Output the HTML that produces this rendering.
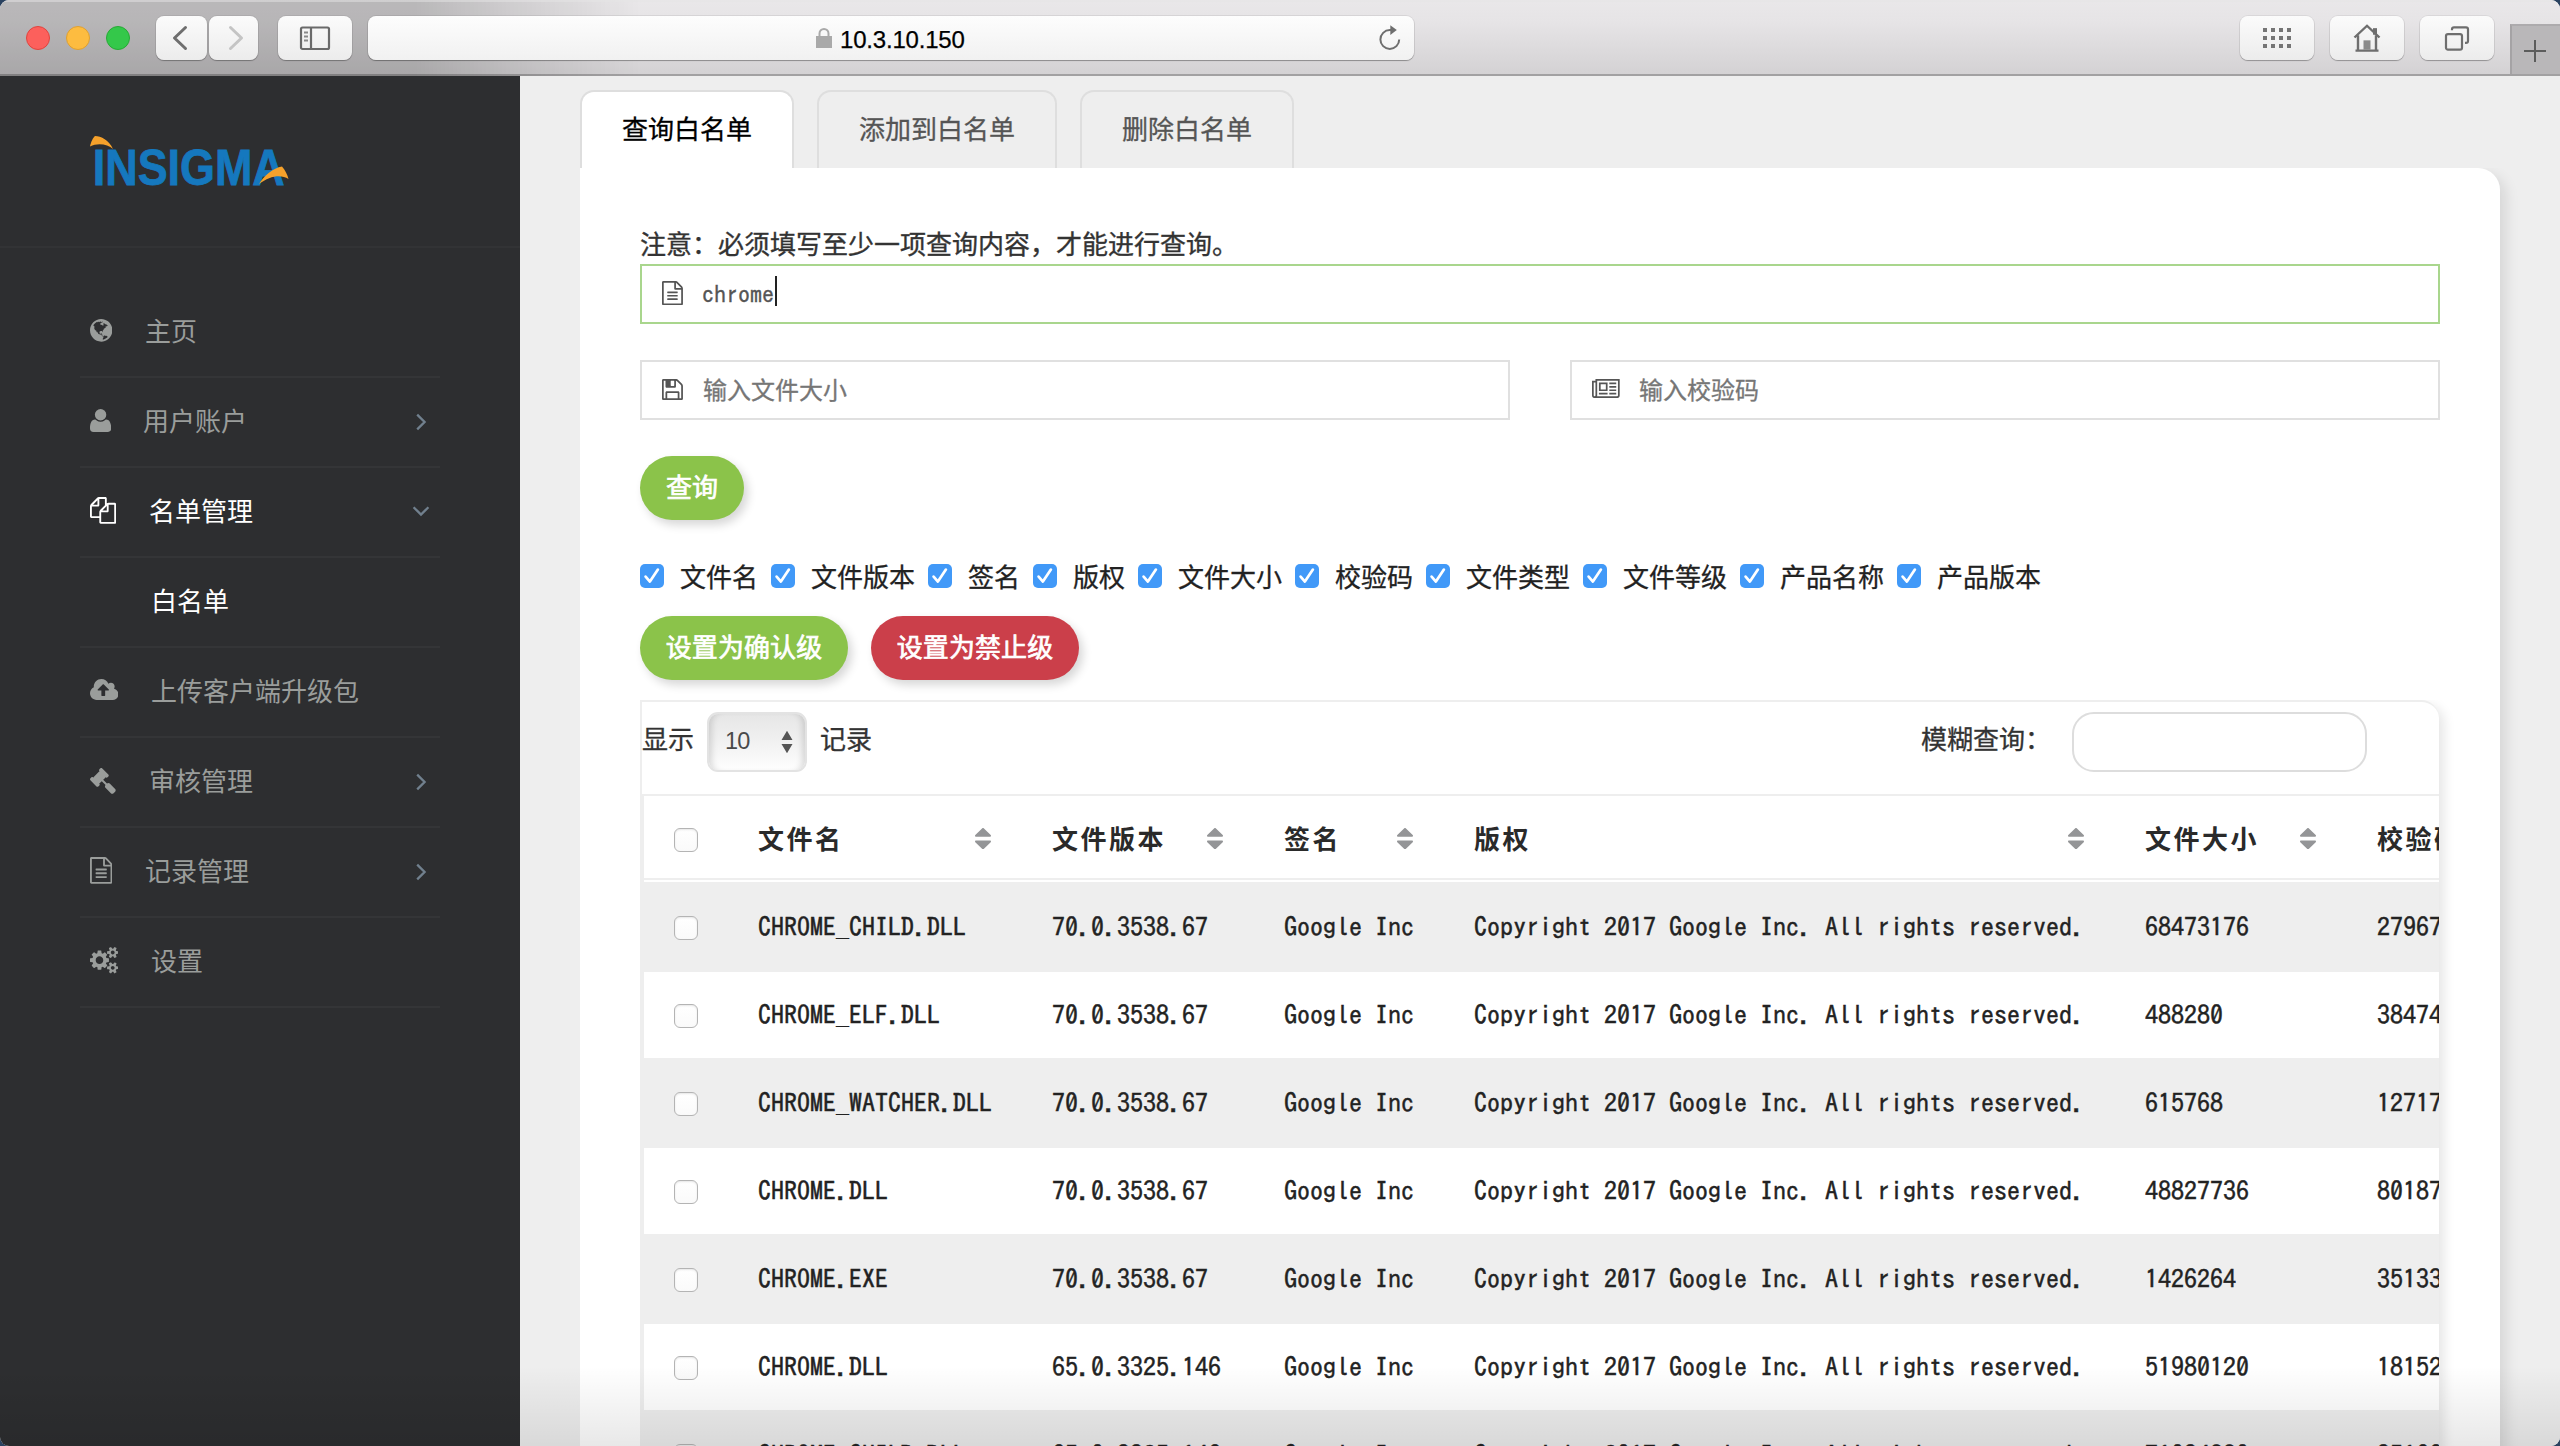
<!DOCTYPE html>
<html lang="zh-CN">
<head>
<meta charset="utf-8">
<title>10.3.10.150</title>
<style>
*{box-sizing:border-box;margin:0;padding:0}
html,body{width:2560px;height:1446px;overflow:hidden;background:#2a4260}
body{font-family:"Liberation Sans","Noto Sans CJK SC",sans-serif;position:relative}
.abs{position:absolute}
#win{position:absolute;left:0;top:0;width:2560px;height:1446px;border-radius:9px 9px 9px 9px;overflow:hidden;background:#eeeeee}
/* ---------- Safari toolbar ---------- */
#tb{position:absolute;left:0;top:0;width:2560px;height:76px;
 background:linear-gradient(to right,rgba(0,0,0,.205) 0,rgba(0,0,0,.205) 415px,rgba(0,0,0,.10) 520px,rgba(0,0,0,0) 640px),linear-gradient(to bottom,#e9e7e9 0,#e6e4e6 20px,#d3d1d3 74px);
 border-top:2px solid rgba(255,255,255,.45);border-bottom:2px solid rgba(0,0,0,.30)}
.tl{position:absolute;top:24px;width:24px;height:24px;border-radius:50%}
.tbtn{position:absolute;top:14px;height:44px;border-radius:8px;background:linear-gradient(#fbfbfb,#ececec);box-shadow:0 1px 1px rgba(0,0,0,.28),0 0 0 1px rgba(0,0,0,.06)}
#url{position:absolute;left:368px;top:14px;width:1046px;height:44px;border-radius:8px;background:linear-gradient(#fdfdfd,#f1f1f1);box-shadow:0 1px 1px rgba(0,0,0,.30),0 0 0 1px rgba(0,0,0,.07)}
#urltxt{position:absolute;left:840px;top:23px;font-size:24px;line-height:30px;color:#000;letter-spacing:-.2px;white-space:nowrap;-webkit-text-stroke:.25px #000}
#newtab{position:absolute;left:2510px;top:22px;width:50px;height:50px;background:#b9b7b9;border-left:2px solid #a5a3a5;border-top:2px solid #adabad}
/* ---------- sidebar ---------- */
#side{position:absolute;left:0;top:76px;width:520px;height:1370px;background:#2d2e30}
#side .hr{position:absolute;left:80px;width:360px;height:2px;background:#343537}
#side .hr0{position:absolute;left:0;top:170px;width:520px;height:2px;background:#323335}
.mi{position:absolute;margin-top:2px;font-size:26px;line-height:40px;color:#9a9d9b;white-space:nowrap}
.mi.on{color:#ffffff}
/* ---------- main ---------- */
#main{position:absolute;left:520px;top:76px;width:2040px;height:1370px;background:#eeeeee;font-family:"Liberation Sans","Noto Sans CJK SC",sans-serif}
.tab{position:absolute;top:14px;height:80px;border:2px solid #dedede;border-bottom:none;border-radius:14px 14px 0 0;font-size:26px;line-height:40px;color:#555;text-align:center;padding-top:17.500px;white-space:nowrap;-webkit-text-stroke:.3px #555}
.tab.on{background:#fff;color:#000;-webkit-text-stroke:.3px #000}
#panel{position:absolute;left:60px;top:92px;width:1920px;height:1400px;background:#fff;border-radius:0 22px 0 0;box-shadow:6px 6px 14px rgba(0,0,0,.10);clip-path:inset(0 -40px -40px 0)}
.note{position:absolute;left:60px;top:57px;font-size:26px;line-height:40px;color:#333;white-space:nowrap;-webkit-text-stroke:.35px #333}
.hw{display:inline-block;width:13px;text-align:left}
.inp{position:absolute;height:60px;border:2px solid #e0e0e0;background:#fff}
.inp .t.ph{left:61px;top:8.500px;color:#767676;-webkit-text-stroke:.3px #767676}
.inp.focus{border-color:#a9d68d}
.inp .t{position:absolute;left:60px;top:8px;font-size:24px;line-height:40px;color:#555;white-space:nowrap}
.inp .t.lat{font-family:"IPAGothic","Liberation Mono",monospace;-webkit-text-stroke:.35px #555}
.caret{position:absolute;left:132.500px;top:10px;width:2px;height:30px;background:#222}
.btn{position:absolute;height:64px;border-radius:32px;color:#fff;font-weight:normal;-webkit-text-stroke:.7px #fff;font-size:26px;line-height:40px;text-align:center;padding-top:12px;white-space:nowrap;box-shadow:4px 5px 10px rgba(0,0,0,.16);letter-spacing:.1px}
.g{background:#8bc34a}
.r{background:#cb3f4a}
.ck{position:absolute;top:396px;width:24px;height:24px;border-radius:5px;background:#4199f8}
.ck svg{position:absolute;left:0;top:0}
.cl{position:absolute;top:389.5px;font-size:26px;line-height:40px;color:#222;white-space:nowrap;-webkit-text-stroke:.3px #222}
/* table card */
#card{position:absolute;left:60px;top:532px;width:1799px;height:900px;border:2px solid #eeeeee;border-right:none;border-radius:0 18px 0 0;background:#fff;overflow:hidden;box-shadow:5px 5px 12px rgba(0,0,0,.10);clip-path:inset(0 -40px -40px 0)}
#card .lb{position:absolute;left:0;top:92px;width:2px;height:900px;background:#eeeeee}
.lab{position:absolute;font-size:26px;line-height:40px;color:#333;white-space:nowrap;-webkit-text-stroke:.3px #333}
#sel{position:absolute;left:65px;top:10px;width:100px;height:60px;border-radius:11px;border:2px solid #e3e3e3;background:linear-gradient(#e6e6e6,#f1f1f1 50%,#fefefe);box-shadow:inset 7px 0 6px -4px rgba(0,0,0,.13),inset -7px 0 6px -4px rgba(0,0,0,.13)}
#sel span{position:absolute;left:16px;top:7px;font-size:23.500px;line-height:40px;color:#4a4a4a;letter-spacing:-.8px}
#srch{position:absolute;left:1430px;top:10px;width:295px;height:60px;border:2px solid #dddddd;border-radius:22px;background:#fff}
.hl{position:absolute;left:0;width:1800px;height:2px;background:#eeeeee}
.th{position:absolute;top:118px;font-size:26px;line-height:40px;font-weight:bold;color:#2a2a2a;letter-spacing:2.5px;white-space:nowrap}
.row{position:absolute;left:2px;width:1800px;height:88px;border-top:2px solid #eeeeee;background:#fff}
.row.odd{background:#eeeeee}
.row span{position:absolute;top:22px;font-family:"IPAGothic","Liberation Mono",monospace;font-size:26px;line-height:40px;color:#222;white-space:pre;-webkit-text-stroke:.45px #222}
.cb{position:absolute;width:24px;height:24px;border-radius:6px;background:linear-gradient(#fff,#fafafa);border:1.5px solid #b4b4b4;box-shadow:inset 0 1px 2px rgba(0,0,0,.10)}
#fade{position:absolute;left:0;top:1366px;width:2560px;height:80px;background:linear-gradient(rgba(0,0,0,0),rgba(0,0,0,.09));pointer-events:none}
</style>
</head>
<body>
<div id="win">

<div id="main">
<div class="tab on" style="left:60px;width:214px">查询白名单</div>
<div class="tab" style="left:297px;width:240px">添加到白名单</div>
<div class="tab" style="left:560px;width:214px">删除白名单</div>
<div id="panel">
<div class="note">注意：必须填写至少一项查询内容，才能进行查询。</div>
<div class="inp focus" style="left:60px;top:96px;width:1800px">
<svg class="abs" style="left:19.90px;top:15.10px" width="20.95" height="24.30" viewBox="0 -1536 1536 1792" preserveAspectRatio="none"><path fill="#555" transform="scale(1,-1)" d="M1468 1156 1156 1468C1119 1505 1045 1536 992 1536H96C43 1536 0 1493 0 1440V-160C0 -213 43 -256 96 -256H1440C1493 -256 1536 -213 1536 -160V992C1536 1045 1505 1119 1468 1156ZM1024 1400C1041 1394 1058 1385 1065 1378L1378 1065C1385 1058 1394 1041 1400 1024H1024ZM1408 -128H128V1408H896V992C896 939 939 896 992 896H1408ZM384 736V672C384 654 398 640 416 640H1120C1138 640 1152 654 1152 672V736C1152 754 1138 768 1120 768H416C398 768 384 754 384 736ZM1120 512H416C398 512 384 498 384 480V416C384 398 398 384 416 384H1120C1138 384 1152 398 1152 416V480C1152 498 1138 512 1120 512ZM1120 256H416C398 256 384 242 384 224V160C384 142 398 128 416 128H1120C1138 128 1152 142 1152 160V224C1152 242 1138 256 1120 256Z"/></svg>
<span class="t lat">chrome</span><i class="caret"></i></div>
<div class="inp" style="left:60px;top:192px;width:870px">
<svg class="abs" style="left:19.90px;top:16.80px" width="20.95" height="21.10" viewBox="0 -1408 1536 1536" preserveAspectRatio="none"><path fill="#555" transform="scale(1,-1)" d="M384 0V384H1152V0ZM1280 0V416C1280 469 1237 512 1184 512H352C299 512 256 469 256 416V0H128V1280H256V864C256 811 299 768 352 768H928C981 768 1024 811 1024 864V1280C1044 1280 1083 1264 1097 1250L1378 969C1391 956 1408 915 1408 896V0ZM896 928C896 911 881 896 864 896H672C655 896 640 911 640 928V1248C640 1265 655 1280 672 1280H864C881 1280 896 1265 896 1248V928ZM1536 896C1536 949 1506 1022 1468 1060L1188 1340C1150 1378 1077 1408 1024 1408H96C43 1408 0 1365 0 1312V-32C0 -85 43 -128 96 -128H1440C1493 -128 1536 -85 1536 -32Z"/></svg>
<span class="t ph">输入文件大小</span></div>
<div class="inp" style="left:990px;top:192px;width:870px">
<svg class="abs" style="left:19.90px;top:16.80px" width="27.70" height="19.05" viewBox="0 -1408 2048 1408" preserveAspectRatio="none"><path fill="#555" transform="scale(1,-1)" d="M1024 1024V640H640V1024H1024ZM1152 384H512V256H1152ZM1152 1152H512V512H1152ZM1792 384H1280V256H1792ZM1792 640H1280V512H1792ZM1792 896H1280V768H1792ZM1792 1152H1280V1024H1792ZM256 192C256 157 227 128 192 128C157 128 128 157 128 192V1152H256V192ZM1920 192C1920 157 1891 128 1856 128H373C380 148 384 170 384 192V1280H1920V192ZM2048 1408H256V1280H0V192C0 86 86 0 192 0H1856C1962 0 2048 86 2048 192Z"/></svg>
<span class="t ph" style="left:67px">输入校验码</span></div>
<div class="btn g" style="left:60px;top:288px;width:104px">查询</div>
<div class="ck" style="left:60px"><svg width="24" height="24" viewBox="0 0 24 24"><path d="M5.6 12.6l4.3 5 8-12" fill="none" stroke="#fff" stroke-width="2.7" stroke-linecap="round" stroke-linejoin="round"/></svg></div>
<div class="cl" style="left:100px">文件名</div>
<div class="ck" style="left:191px"><svg width="24" height="24" viewBox="0 0 24 24"><path d="M5.6 12.6l4.3 5 8-12" fill="none" stroke="#fff" stroke-width="2.7" stroke-linecap="round" stroke-linejoin="round"/></svg></div>
<div class="cl" style="left:231px">文件版本</div>
<div class="ck" style="left:348px"><svg width="24" height="24" viewBox="0 0 24 24"><path d="M5.6 12.6l4.3 5 8-12" fill="none" stroke="#fff" stroke-width="2.7" stroke-linecap="round" stroke-linejoin="round"/></svg></div>
<div class="cl" style="left:388px">签名</div>
<div class="ck" style="left:453px"><svg width="24" height="24" viewBox="0 0 24 24"><path d="M5.6 12.6l4.3 5 8-12" fill="none" stroke="#fff" stroke-width="2.7" stroke-linecap="round" stroke-linejoin="round"/></svg></div>
<div class="cl" style="left:493px">版权</div>
<div class="ck" style="left:558px"><svg width="24" height="24" viewBox="0 0 24 24"><path d="M5.6 12.6l4.3 5 8-12" fill="none" stroke="#fff" stroke-width="2.7" stroke-linecap="round" stroke-linejoin="round"/></svg></div>
<div class="cl" style="left:598px">文件大小</div>
<div class="ck" style="left:715px"><svg width="24" height="24" viewBox="0 0 24 24"><path d="M5.6 12.6l4.3 5 8-12" fill="none" stroke="#fff" stroke-width="2.7" stroke-linecap="round" stroke-linejoin="round"/></svg></div>
<div class="cl" style="left:755px">校验码</div>
<div class="ck" style="left:846px"><svg width="24" height="24" viewBox="0 0 24 24"><path d="M5.6 12.6l4.3 5 8-12" fill="none" stroke="#fff" stroke-width="2.7" stroke-linecap="round" stroke-linejoin="round"/></svg></div>
<div class="cl" style="left:886px">文件类型</div>
<div class="ck" style="left:1003px"><svg width="24" height="24" viewBox="0 0 24 24"><path d="M5.6 12.6l4.3 5 8-12" fill="none" stroke="#fff" stroke-width="2.7" stroke-linecap="round" stroke-linejoin="round"/></svg></div>
<div class="cl" style="left:1043px">文件等级</div>
<div class="ck" style="left:1160px"><svg width="24" height="24" viewBox="0 0 24 24"><path d="M5.6 12.6l4.3 5 8-12" fill="none" stroke="#fff" stroke-width="2.7" stroke-linecap="round" stroke-linejoin="round"/></svg></div>
<div class="cl" style="left:1200px">产品名称</div>
<div class="ck" style="left:1317px"><svg width="24" height="24" viewBox="0 0 24 24"><path d="M5.6 12.6l4.3 5 8-12" fill="none" stroke="#fff" stroke-width="2.7" stroke-linecap="round" stroke-linejoin="round"/></svg></div>
<div class="cl" style="left:1357px">产品版本</div>
<div class="btn g" style="left:60px;top:448px;width:208px">设置为确认级</div>
<div class="btn r" style="left:291px;top:448px;width:208px">设置为禁止级</div>
<div id="card">
<div class="lab" style="left:0px;top:18px">显示</div>
<div id="sel"><span>10</span><svg class="abs" style="left:71px;top:16px" width="14" height="24" viewBox="0 0 14 24"><path d="M7 0.800l5.500 9.200h-11zM7 23.200l5.500-9.200h-11z" fill="#555"/></svg></div>
<div class="lab" style="left:178px;top:18px">记录</div>
<div class="lab" style="left:1279px;top:18px">模糊查询：</div>
<div id="srch"></div>
<div class="hl" style="top:92px"></div>
<div class="lb"></div>
<div class="cb" style="left:32px;top:126px"></div>
<div class="th" style="left:116px">文件名</div>
<svg class="abs" style="left:333.00px;top:125.80px" width="16.00" height="21.20" viewBox="0 -1344 1024 1408" preserveAspectRatio="none"><path fill="#949597" transform="scale(1,-1)" d="M1024 448C1024 483 995 512 960 512H64C29 512 0 483 0 448C0 431 7 415 19 403L467 -45C479 -57 495 -64 512 -64C529 -64 545 -57 557 -45L1005 403C1017 415 1024 431 1024 448ZM1024 832C1024 849 1017 865 1005 877L557 1325C545 1337 529 1344 512 1344C495 1344 479 1337 467 1325L19 877C7 865 0 849 0 832C0 797 29 768 64 768H960C995 768 1024 797 1024 832Z"/></svg>
<div class="th" style="left:410px">文件版本</div>
<svg class="abs" style="left:565.00px;top:125.80px" width="16.00" height="21.20" viewBox="0 -1344 1024 1408" preserveAspectRatio="none"><path fill="#949597" transform="scale(1,-1)" d="M1024 448C1024 483 995 512 960 512H64C29 512 0 483 0 448C0 431 7 415 19 403L467 -45C479 -57 495 -64 512 -64C529 -64 545 -57 557 -45L1005 403C1017 415 1024 431 1024 448ZM1024 832C1024 849 1017 865 1005 877L557 1325C545 1337 529 1344 512 1344C495 1344 479 1337 467 1325L19 877C7 865 0 849 0 832C0 797 29 768 64 768H960C995 768 1024 797 1024 832Z"/></svg>
<div class="th" style="left:642px">签名</div>
<svg class="abs" style="left:755.00px;top:125.80px" width="16.00" height="21.20" viewBox="0 -1344 1024 1408" preserveAspectRatio="none"><path fill="#949597" transform="scale(1,-1)" d="M1024 448C1024 483 995 512 960 512H64C29 512 0 483 0 448C0 431 7 415 19 403L467 -45C479 -57 495 -64 512 -64C529 -64 545 -57 557 -45L1005 403C1017 415 1024 431 1024 448ZM1024 832C1024 849 1017 865 1005 877L557 1325C545 1337 529 1344 512 1344C495 1344 479 1337 467 1325L19 877C7 865 0 849 0 832C0 797 29 768 64 768H960C995 768 1024 797 1024 832Z"/></svg>
<div class="th" style="left:832px">版权</div>
<svg class="abs" style="left:1426.00px;top:125.80px" width="16.00" height="21.20" viewBox="0 -1344 1024 1408" preserveAspectRatio="none"><path fill="#949597" transform="scale(1,-1)" d="M1024 448C1024 483 995 512 960 512H64C29 512 0 483 0 448C0 431 7 415 19 403L467 -45C479 -57 495 -64 512 -64C529 -64 545 -57 557 -45L1005 403C1017 415 1024 431 1024 448ZM1024 832C1024 849 1017 865 1005 877L557 1325C545 1337 529 1344 512 1344C495 1344 479 1337 467 1325L19 877C7 865 0 849 0 832C0 797 29 768 64 768H960C995 768 1024 797 1024 832Z"/></svg>
<div class="th" style="left:1503px">文件大小</div>
<svg class="abs" style="left:1658.00px;top:125.80px" width="16.00" height="21.20" viewBox="0 -1344 1024 1408" preserveAspectRatio="none"><path fill="#949597" transform="scale(1,-1)" d="M1024 448C1024 483 995 512 960 512H64C29 512 0 483 0 448C0 431 7 415 19 403L467 -45C479 -57 495 -64 512 -64C529 -64 545 -57 557 -45L1005 403C1017 415 1024 431 1024 448ZM1024 832C1024 849 1017 865 1005 877L557 1325C545 1337 529 1344 512 1344C495 1344 479 1337 467 1325L19 877C7 865 0 849 0 832C0 797 29 768 64 768H960C995 768 1024 797 1024 832Z"/></svg>
<div class="th" style="left:1735px">校验码</div>
<div class="hl" style="top:176px;left:2px"></div>
<div class="row odd" style="top:180px">
<div class="cb" style="left:30px;top:32px"></div>
<span style="left:114px">CHROME_CHILD.DLL</span><span style="left:408px">70.0.3538.67</span><span style="left:640px">Google Inc</span><span style="left:830px">Copyright 2017 Google Inc. All rights reserved.</span><span style="left:1501px">68473176</span><span style="left:1733px">27967b5c</span>
</div>
<div class="row" style="top:268px">
<div class="cb" style="left:30px;top:32px"></div>
<span style="left:114px">CHROME_ELF.DLL</span><span style="left:408px">70.0.3538.67</span><span style="left:640px">Google Inc</span><span style="left:830px">Copyright 2017 Google Inc. All rights reserved.</span><span style="left:1501px">488280</span><span style="left:1733px">38474e0a</span>
</div>
<div class="row odd" style="top:356px">
<div class="cb" style="left:30px;top:32px"></div>
<span style="left:114px">CHROME_WATCHER.DLL</span><span style="left:408px">70.0.3538.67</span><span style="left:640px">Google Inc</span><span style="left:830px">Copyright 2017 Google Inc. All rights reserved.</span><span style="left:1501px">615768</span><span style="left:1733px">12717d3f</span>
</div>
<div class="row" style="top:444px">
<div class="cb" style="left:30px;top:32px"></div>
<span style="left:114px">CHROME.DLL</span><span style="left:408px">70.0.3538.67</span><span style="left:640px">Google Inc</span><span style="left:830px">Copyright 2017 Google Inc. All rights reserved.</span><span style="left:1501px">48827736</span><span style="left:1733px">80187a6c</span>
</div>
<div class="row odd" style="top:532px">
<div class="cb" style="left:30px;top:32px"></div>
<span style="left:114px">CHROME.EXE</span><span style="left:408px">70.0.3538.67</span><span style="left:640px">Google Inc</span><span style="left:830px">Copyright 2017 Google Inc. All rights reserved.</span><span style="left:1501px">1426264</span><span style="left:1733px">35133b9e</span>
</div>
<div class="row" style="top:620px">
<div class="cb" style="left:30px;top:32px"></div>
<span style="left:114px">CHROME.DLL</span><span style="left:408px">65.0.3325.146</span><span style="left:640px">Google Inc</span><span style="left:830px">Copyright 2017 Google Inc. All rights reserved.</span><span style="left:1501px">51980120</span><span style="left:1733px">18152f4d</span>
</div>
<div class="row odd" style="top:708px">
<div class="cb" style="left:30px;top:32px"></div>
<span style="left:114px">CHROME_CHILD.DLL</span><span style="left:408px">65.0.3325.146</span><span style="left:640px">Google Inc</span><span style="left:830px">Copyright 2017 Google Inc. All rights reserved.</span><span style="left:1501px">71034880</span><span style="left:1733px">35166c2a</span>
</div>
</div>
</div>
</div>
<div id="side">
<svg class="abs" style="left:84px;top:52px" width="216" height="64" viewBox="0 0 216 64">
<text x="8.800" y="56.800" font-family="'Liberation Sans',sans-serif" font-weight="bold" font-size="49.500" fill="#1578be" stroke="#1578be" stroke-width=".8" textLength="192" lengthAdjust="spacingAndGlyphs">INSIGMA</text>
<path d="M6 18.500C7 14 9 9.500 11 8C17 8 25 12 29 21C24 16.500 14 14.500 6 18.500Z" fill="#f5a12b"/>
<path d="M175 56C180 48 189 40 198 38.500C201 42 203.500 47 204.500 51C197 46 186 47.500 175 56Z" fill="#f5a12b"/>
</svg>

<div class="hr0"></div>
<div class="hr" style="top:300px"></div>
<div class="hr" style="top:390px"></div>
<div class="hr" style="top:480px"></div>
<div class="hr" style="top:570px"></div>
<div class="hr" style="top:660px"></div>
<div class="hr" style="top:750px"></div>
<div class="hr" style="top:840px"></div>
<div class="hr" style="top:930px"></div>
<svg class="abs" style="left:90.00px;top:243.30px" width="22.40" height="22.70" viewBox="0 -1408 1536 1536" preserveAspectRatio="none"><path fill="#9a9d9b" transform="scale(1,-1)" d="M768 1408C344 1408 0 1064 0 640C0 216 344 -128 768 -128C1192 -128 1536 216 1536 640C1536 1064 1192 1408 768 1408ZM1042 887C1053 894 1071 903 1085 899C1096 896 1105 892 1092 883C1086 879 1077 883 1070 881C1079 879 1092 875 1088 866C1114 851 1080 833 1063 835C1071 834 1046 819 1046 820C1037 815 1025 815 1018 806C1010 795 1021 776 1006 780C1000 767 977 774 967 760C978 748 956 731 945 746C935 742 940 731 930 725C934 719 935 713 928 709C930 710 942 700 945 699C943 694 939 690 934 690C939 677 928 663 919 655C909 647 886 639 883 637C865 620 853 595 885 588C886 588 886 555 887 554C889 542 894 507 873 520C863 525 857 553 854 564C851 576 850 576 842 588C829 573 827 584 816 591C805 597 789 595 783 601C768 590 757 593 754 610C750 602 758 590 757 587C752 577 743 579 735 585C722 595 694 578 679 585C680 585 684 581 687 579C684 567 677 574 671 570C664 565 658 555 652 550C665 525 651 501 652 474C652 454 665 419 684 408C693 403 723 401 732 405C746 411 744 422 749 434C754 447 760 453 775 454C818 456 785 421 780 403C777 390 776 375 774 363C779 361 784 362 789 362C789 366 792 371 792 374C798 364 818 361 824 373C831 361 845 352 847 338C849 324 862 309 843 309C829 309 845 281 847 276C858 256 876 248 896 258C896 250 893 228 882 226C872 224 853 245 857 256C856 252 853 249 850 247C840 259 823 265 814 277C812 280 785 321 791 323C777 317 749 327 736 334C715 345 712 374 686 370C668 367 663 360 642 368C628 373 616 383 602 390C586 399 558 408 552 428C546 444 548 463 539 478C533 488 515 508 502 508C514 508 491 538 488 541C477 554 437 589 445 609C447 612 425 620 421 621C425 611 426 600 431 591C436 581 442 572 448 562C459 544 474 522 472 500C459 496 463 515 459 523C452 536 433 536 428 550C430 551 431 551 433 552C434 569 409 583 413 595C399 606 399 627 389 641C380 654 365 660 352 669C347 672 311 718 324 721C304 716 294 763 297 775C297 775 295 775 295 776C299 788 292 850 308 851C297 850 294 877 297 882C299 886 314 871 315 869C321 872 327 880 325 887C322 895 311 902 304 908C301 910 261 936 260 935C264 942 263 949 257 954C238 939 248 968 238 971C234 972 230 975 226 979C284 1071 365 1148 461 1201C467 1202 475 1202 483 1202C501 1200 511 1185 524 1176C526 1181 522 1189 519 1194C522 1202 534 1204 541 1206C550 1207 563 1209 571 1205C565 1214 558 1222 551 1230C550 1229 547 1227 546 1225C535 1234 514 1222 504 1218C496 1214 489 1209 481 1206C476 1204 473 1204 469 1205C499 1221 530 1235 563 1246C569 1242 575 1235 584 1228C578 1233 578 1210 580 1206C591 1191 615 1201 630 1201C629 1201 674 1195 665 1206C672 1196 672 1181 681 1172C690 1181 677 1191 683 1200C685 1204 703 1209 709 1212C716 1217 704 1224 701 1226C691 1232 652 1235 671 1258C678 1266 703 1262 711 1257C722 1251 734 1240 719 1230C726 1229 759 1220 754 1207C757 1213 762 1222 770 1222C779 1221 781 1200 785 1195C799 1170 823 1220 827 1218C809 1225 843 1234 852 1231C859 1228 870 1204 857 1205C868 1195 869 1173 849 1174C835 1175 819 1194 806 1179C797 1169 793 1154 784 1145C770 1131 751 1132 734 1134C741 1133 719 1110 717 1106C711 1099 707 1091 705 1083C703 1073 705 1062 700 1052C717 1057 726 1026 719 1025C740 1028 757 1028 777 1021C791 1016 812 1010 818 995C822 1001 841 998 847 996C859 990 860 977 863 966C867 951 880 926 897 934C900 936 922 946 914 952C906 959 897 977 905 987C913 998 932 1001 937 1015C945 1038 913 1035 913 1052C913 1062 926 1065 925 1077C925 1087 910 1107 922 1114C932 1120 980 1110 989 1104C998 1098 1026 1090 1028 1081C1026 1081 1025 1081 1023 1081C1031 1074 1038 1059 1024 1055C1033 1057 1059 1047 1041 1041C1047 1044 1052 1042 1058 1046C1065 1050 1069 1057 1078 1052C1080 1051 1091 1073 1097 1072C1106 1071 1108 1058 1112 1052C1116 1043 1127 1040 1131 1031C1138 1014 1135 998 1158 992C1165 990 1184 1001 1183 986C1187 990 1189 993 1189 994C1190 980 1196 964 1213 966C1213 966 1213 947 1211 944C1205 935 1190 937 1181 932C1178 931 1154 910 1157 907C1144 922 1123 922 1106 918C1088 915 1071 913 1054 906C1046 902 1038 898 1032 891C1029 887 1024 869 1019 868C1029 870 1034 881 1042 887ZM879 10C878 15 877 25 877 26C876 42 893 53 892 68C881 71 878 82 880 94C882 111 897 123 909 134C921 145 924 168 921 182C916 206 916 231 912 255C913 249 930 251 933 243C937 250 939 259 944 266C948 272 955 274 961 279C971 285 992 308 1004 294C1014 282 989 269 1002 258C1006 266 1002 278 1010 286C1026 304 1037 284 1053 279C1070 274 1076 268 1089 257C1085 261 1105 268 1107 269C1126 273 1134 262 1147 252C1161 242 1183 235 1181 215C1191 213 1197 210 1205 207C1213 203 1224 205 1230 199C1138 102 1016 34 879 10Z"/></svg>
<svg class="abs" style="left:89.75px;top:333.30px" width="21.200" height="23" viewBox="0 0 21.200 23"><circle cx="10.600" cy="5.700" r="5.700" fill="#9a9d9b"/><path fill="#9a9d9b" d="M3.500 23C1.200 23 0 21.600 0 19.500C0 14.500 1.300 10.500 5 10.400C6 10.400 7.500 12.700 10.600 12.700C13.700 12.700 15.200 10.400 16.200 10.400C19.900 10.500 21.200 14.500 21.200 19.500C21.200 21.600 20 23 17.700 23Z"/></svg>
<svg class="abs" style="left:90.00px;top:421.20px" width="26.10" height="26.80" viewBox="0 -1536 1792 1792" preserveAspectRatio="none"><path fill="#ffffff" transform="scale(1,-1)" d="M1696 1152H1280C1241 1152 1191 1135 1152 1112V1440C1152 1493 1109 1536 1056 1536H640C587 1536 513 1505 476 1468L68 1060C31 1023 0 949 0 896V224C0 171 43 128 96 128H640V-160C640 -213 683 -256 736 -256H1696C1749 -256 1792 -213 1792 -160V1056C1792 1109 1749 1152 1696 1152ZM1152 939V640H853ZM512 1323V1024H213ZM708 676C671 639 640 565 640 512V256H128V896H544C597 896 640 939 640 992V1408H1024V992ZM1664 -128H768V512H1184C1237 512 1280 555 1280 608V1024H1664Z"/></svg>
<svg class="abs" style="left:89.75px;top:603.30px" width="28.45" height="20.90" viewBox="0 -1408 1920 1408" preserveAspectRatio="none"><path fill="#9a9d9b" transform="scale(1,-1)" d="M1280 672C1280 655 1266 640 1248 640H1024V288C1024 271 1009 256 992 256H800C783 256 768 271 768 288V640H544C526 640 512 654 512 672C512 681 516 689 522 696L873 1047C879 1053 888 1056 896 1056C905 1056 913 1053 919 1047L1271 695C1277 689 1280 680 1280 672ZM1920 384C1920 562 1797 717 1623 758C1650 799 1664 847 1664 896C1664 1037 1549 1152 1408 1152C1347 1152 1288 1130 1242 1090C1163 1282 976 1408 768 1408C485 1408 256 1179 256 896C256 882 257 868 258 853C101 780 0 622 0 448C0 201 201 0 448 0H1536C1748 0 1920 172 1920 384Z"/></svg>
<svg class="abs" style="left:90.40px;top:691.80px" width="25.70" height="25.80" viewBox="40 -1496 1731 1731" preserveAspectRatio="none"><path fill="#9a9d9b" transform="scale(1,-1)" d="M1771 0C1771 34 1757 67 1734 91L1371 454C1347 477 1314 491 1280 491C1242 491 1211 475 1184 448L928 704L1054 830C1063 839 1068 851 1068 864C1068 877 1063 889 1054 898C1084 868 1106 840 1152 840C1178 840 1201 850 1220 868C1256 902 1304 938 1304 992C1304 1017 1294 1042 1276 1060L868 1468C850 1486 825 1496 800 1496C746 1496 710 1448 676 1412C658 1393 648 1370 648 1344C648 1298 676 1276 706 1246C697 1255 685 1260 672 1260C659 1260 647 1255 638 1246L290 898C281 889 276 877 276 864C276 851 281 839 290 830C260 860 238 888 192 888C166 888 143 878 124 860C88 826 40 790 40 736C40 711 50 686 68 668L476 260C494 242 519 232 544 232C598 232 634 280 668 316C686 335 696 358 696 384C696 430 668 452 638 482C647 473 659 468 672 468C685 468 697 473 706 482L832 608L1088 352C1061 325 1045 294 1045 256C1045 222 1059 189 1083 166L1446 -198C1469 -221 1502 -235 1536 -235C1570 -235 1603 -221 1627 -198L1734 -90C1757 -67 1771 -34 1771 0Z"/></svg>
<svg class="abs" style="left:90.00px;top:781.40px" width="22.40" height="26.80" viewBox="0 -1536 1536 1792" preserveAspectRatio="none"><path fill="#9a9d9b" transform="scale(1,-1)" d="M1468 1156 1156 1468C1119 1505 1045 1536 992 1536H96C43 1536 0 1493 0 1440V-160C0 -213 43 -256 96 -256H1440C1493 -256 1536 -213 1536 -160V992C1536 1045 1505 1119 1468 1156ZM1024 1400C1041 1394 1058 1385 1065 1378L1378 1065C1385 1058 1394 1041 1400 1024H1024ZM1408 -128H128V1408H896V992C896 939 939 896 992 896H1408ZM384 736V672C384 654 398 640 416 640H1120C1138 640 1152 654 1152 672V736C1152 754 1138 768 1120 768H416C398 768 384 754 384 736ZM1120 512H416C398 512 384 498 384 480V416C384 398 398 384 416 384H1120C1138 384 1152 398 1152 416V480C1152 498 1138 512 1120 512ZM1120 256H416C398 256 384 242 384 224V160C384 142 398 128 416 128H1120C1138 128 1152 142 1152 160V224C1152 242 1138 256 1120 256Z"/></svg>
<svg class="abs" style="left:89.75px;top:871.40px" width="28.45" height="26.40" viewBox="0 -1520 1920 1761" preserveAspectRatio="none"><path fill="#9a9d9b" transform="scale(1,-1)" d="M896 640C896 499 781 384 640 384C499 384 384 499 384 640C384 781 499 896 640 896C781 896 896 781 896 640ZM1664 128C1664 58 1607 0 1536 0C1466 0 1408 57 1408 128C1408 198 1466 256 1536 256C1606 256 1664 198 1664 128ZM1664 1152C1664 1082 1607 1024 1536 1024C1466 1024 1408 1081 1408 1152C1408 1222 1466 1280 1536 1280C1606 1280 1664 1222 1664 1152ZM1280 731C1280 745 1270 758 1256 761L1104 784C1095 812 1083 839 1070 866C1098 905 1128 941 1157 980C1161 986 1164 992 1164 999C1164 1027 1046 1135 1020 1159C1014 1164 1007 1167 999 1167C992 1167 985 1165 979 1160L861 1071C837 1083 812 1094 786 1102L763 1255C761 1269 747 1280 733 1280H547C533 1280 521 1270 517 1256C504 1207 499 1152 494 1102C467 1093 442 1083 417 1070L302 1160C296 1164 289 1167 281 1167C252 1167 140 1046 120 1019C115 1013 113 1006 113 999C113 992 116 985 120 979C152 941 182 904 210 864C197 839 186 814 178 788L23 764C10 762 0 747 0 734V549C0 535 10 522 24 520L176 496C185 468 197 441 211 414C182 375 152 338 123 300C119 294 116 288 116 281C116 252 234 145 260 121C266 116 273 113 281 113C288 113 296 115 301 120L419 209C443 197 468 186 494 178L517 25C519 11 533 0 547 0H733C747 0 759 10 763 24C776 73 781 128 786 179C813 187 838 197 863 210L978 120C984 116 991 113 999 113C1028 113 1140 235 1160 262C1165 267 1167 274 1167 281C1167 289 1164 295 1160 301C1128 339 1098 376 1070 416C1083 441 1094 466 1102 492L1257 516C1270 518 1280 533 1280 546ZM1920 198C1920 213 1791 227 1771 229C1763 247 1753 265 1741 281C1750 301 1792 401 1792 419C1792 421 1791 424 1788 426C1776 433 1669 496 1664 496L1658 494C1624 460 1594 421 1566 382C1556 383 1546 384 1536 384C1526 384 1516 383 1506 382C1496 397 1421 496 1408 496C1403 496 1296 432 1284 426C1281 424 1280 421 1280 419C1280 402 1322 301 1331 281C1319 265 1309 247 1301 229C1281 227 1152 213 1152 198V58C1152 43 1281 29 1301 27C1309 8 1319 -9 1331 -25C1322 -45 1280 -146 1280 -163C1280 -165 1281 -168 1284 -170C1296 -177 1403 -241 1408 -241C1421 -241 1496 -141 1506 -126C1516 -127 1526 -128 1536 -128C1546 -128 1556 -127 1566 -126C1576 -141 1651 -241 1664 -241C1669 -241 1776 -177 1788 -170C1791 -168 1792 -166 1792 -163C1792 -145 1750 -45 1741 -25C1753 -9 1763 8 1771 27C1791 29 1920 43 1920 58ZM1920 1222C1920 1237 1791 1251 1771 1253C1763 1271 1753 1289 1741 1305C1750 1325 1792 1425 1792 1443C1792 1445 1791 1448 1788 1450C1776 1457 1669 1520 1664 1520L1658 1518C1624 1484 1594 1445 1566 1406C1556 1407 1546 1408 1536 1408C1526 1408 1516 1407 1506 1406C1496 1421 1421 1520 1408 1520C1403 1520 1296 1456 1284 1450C1281 1448 1280 1445 1280 1443C1280 1426 1322 1325 1331 1305C1319 1289 1309 1271 1301 1253C1281 1251 1152 1237 1152 1222V1082C1152 1067 1281 1053 1301 1051C1309 1032 1319 1015 1331 999C1322 979 1280 878 1280 861C1280 859 1281 856 1284 854C1296 847 1403 783 1408 783C1421 783 1496 883 1506 898C1516 897 1526 896 1536 896C1546 896 1556 897 1566 898C1576 883 1651 783 1664 783C1669 783 1776 847 1788 854C1791 856 1792 858 1792 861C1792 879 1750 979 1741 999C1753 1015 1763 1032 1771 1051C1791 1053 1920 1067 1920 1082Z"/></svg>
<div class="mi" style="left:145px;top:234px">主页</div>
<div class="mi" style="left:143px;top:324px">用户账户</div>
<div class="mi on" style="left:149px;top:414px">名单管理</div>
<div class="mi on" style="left:151px;top:504px">白名单</div>
<div class="mi" style="left:151px;top:594px">上传客户端升级包</div>
<div class="mi" style="left:149px;top:684px">审核管理</div>
<div class="mi" style="left:145px;top:774px">记录管理</div>
<div class="mi" style="left:151px;top:864px">设置</div>
<svg class="abs" style="left:414px;top:336px" width="14" height="20" viewBox="0 0 14 20"><path d="M3.2 2.6l7.4 7.4-7.4 7.400" fill="none" stroke="#71808e" stroke-width="2.3"/></svg>
<svg class="abs" style="left:414px;top:696px" width="14" height="20" viewBox="0 0 14 20"><path d="M3.2 2.6l7.4 7.4-7.4 7.400" fill="none" stroke="#71808e" stroke-width="2.3"/></svg>
<svg class="abs" style="left:414px;top:786px" width="14" height="20" viewBox="0 0 14 20"><path d="M3.2 2.6l7.4 7.4-7.4 7.400" fill="none" stroke="#71808e" stroke-width="2.3"/></svg>
<svg class="abs" style="left:411px;top:428px" width="20" height="14" viewBox="0 0 20 14"><path d="M2.600 3.200l7.400 7.400 7.400-7.400" fill="none" stroke="#71808e" stroke-width="2.3"/></svg>
</div>
<div id="tb">
<i class="tl" style="left:26px;background:#fc605c;border:1px solid #e0443e"></i>
<i class="tl" style="left:66px;background:#fdbc40;border:1px solid #dea032"></i>
<i class="tl" style="left:106px;background:#34c84a;border:1px solid #27aa35"></i>
<div class="tbtn" style="left:156px;width:51px"><svg class="abs" style="left:13px;top:9px" width="24" height="26" viewBox="0 0 24 26"><path d="M16.500 2.500L5.500 13l11 10.500" fill="none" stroke="#6e6e6e" stroke-width="3" stroke-linecap="round" stroke-linejoin="round"/></svg></div>
<div class="tbtn" style="left:209px;width:49px"><svg class="abs" style="left:14px;top:9px" width="24" height="26" viewBox="0 0 24 26"><path d="M7.500 2.500L18.500 13l-11 10.500" fill="none" stroke="#c4c4c4" stroke-width="3" stroke-linecap="round" stroke-linejoin="round"/></svg></div>
<div class="tbtn" style="left:278px;width:74px"><svg class="abs" style="left:21px;top:10px" width="32" height="26" viewBox="0 0 32 26"><rect x="2" y="1.500" width="28" height="21.500" rx="1.500" fill="none" stroke="#6a6a6a" stroke-width="2.200"/><path d="M12 1.500v21.500" stroke="#6a6a6a" stroke-width="2.200"/><path d="M5 6.500h4M5 10.500h4M5 14.500h4" stroke="#8a8a8a" stroke-width="1.800"/></svg></div>
<div id="url"></div>
<svg class="abs" style="left:815px;top:25px" width="18" height="22" viewBox="0 0 18 22"><rect x="1" y="9" width="16" height="12" fill="#a9a9a9"/><path d="M4.500 9.500V6.500a4.500 4.500 0 0 1 9 0v3" fill="none" stroke="#a9a9a9" stroke-width="2"/></svg>
<div id="urltxt">10.3.10.150</div>
<svg class="abs" style="left:1375px;top:21px" width="30" height="30" viewBox="0 0 30 30"><path d="M24.200 16.500a9.400 9.400 0 1 1-9.400-9.400h1.500" fill="none" stroke="#6e6e6e" stroke-width="2"/><path d="M15.300 2.200l6.500 4.900-6.500 4.900z" fill="#6e6e6e"/></svg>
<div class="tbtn" style="left:2240px;width:74px"><svg class="abs" style="left:22px;top:11px" width="30" height="22" viewBox="0 0 30 22"><g fill="#757575"><rect x="1" y="1" width="4" height="4"/><rect x="9" y="1" width="4" height="4"/><rect x="17" y="1" width="4" height="4"/><rect x="25" y="1" width="4" height="4"/><rect x="1" y="9" width="4" height="4"/><rect x="9" y="9" width="4" height="4"/><rect x="17" y="9" width="4" height="4"/><rect x="25" y="9" width="4" height="4"/><rect x="1" y="17" width="4" height="4"/><rect x="9" y="17" width="4" height="4"/><rect x="17" y="17" width="4" height="4"/><rect x="25" y="17" width="4" height="4"/></g></svg></div>
<div class="tbtn" style="left:2330px;width:74px"><svg class="abs" style="left:22px;top:7px" width="30" height="30" viewBox="0 0 30 32" preserveAspectRatio="none"><path d="M2.500 15.500L15 3l12.500 12.500" fill="none" stroke="#6e6e6e" stroke-width="2.400"/><path d="M6 13v15.500M24 13v15.500M3.500 29.500h23" fill="none" stroke="#6e6e6e" stroke-width="2.400"/><rect x="21" y="5.500" width="4" height="7" fill="#6e6e6e"/><rect x="11.500" y="18.500" width="7" height="10" fill="#8a8a8a"/></svg></div>
<div class="tbtn" style="left:2420px;width:74px"><svg class="abs" style="left:24px;top:8.500px" width="28" height="27" viewBox="0 0 28 28" preserveAspectRatio="none"><rect x="2" y="9.500" width="16" height="16" rx="2" fill="none" stroke="#6e6e6e" stroke-width="2.200"/><path d="M8 5.500V4.500a2 2 0 0 1 2-2h12a2 2 0 0 1 2 2v12a2 2 0 0 1-2 2h-1" fill="none" stroke="#6e6e6e" stroke-width="2.200"/></svg></div>
<div id="newtab"><svg class="abs" style="left:11px;top:13px" width="24" height="24" viewBox="0 0 24 24"><path d="M12 1v22M1 12h22" stroke="#5c5c5c" stroke-width="2"/></svg></div>
</div>

<div id="fade"></div>
</div>
</body>
</html>
